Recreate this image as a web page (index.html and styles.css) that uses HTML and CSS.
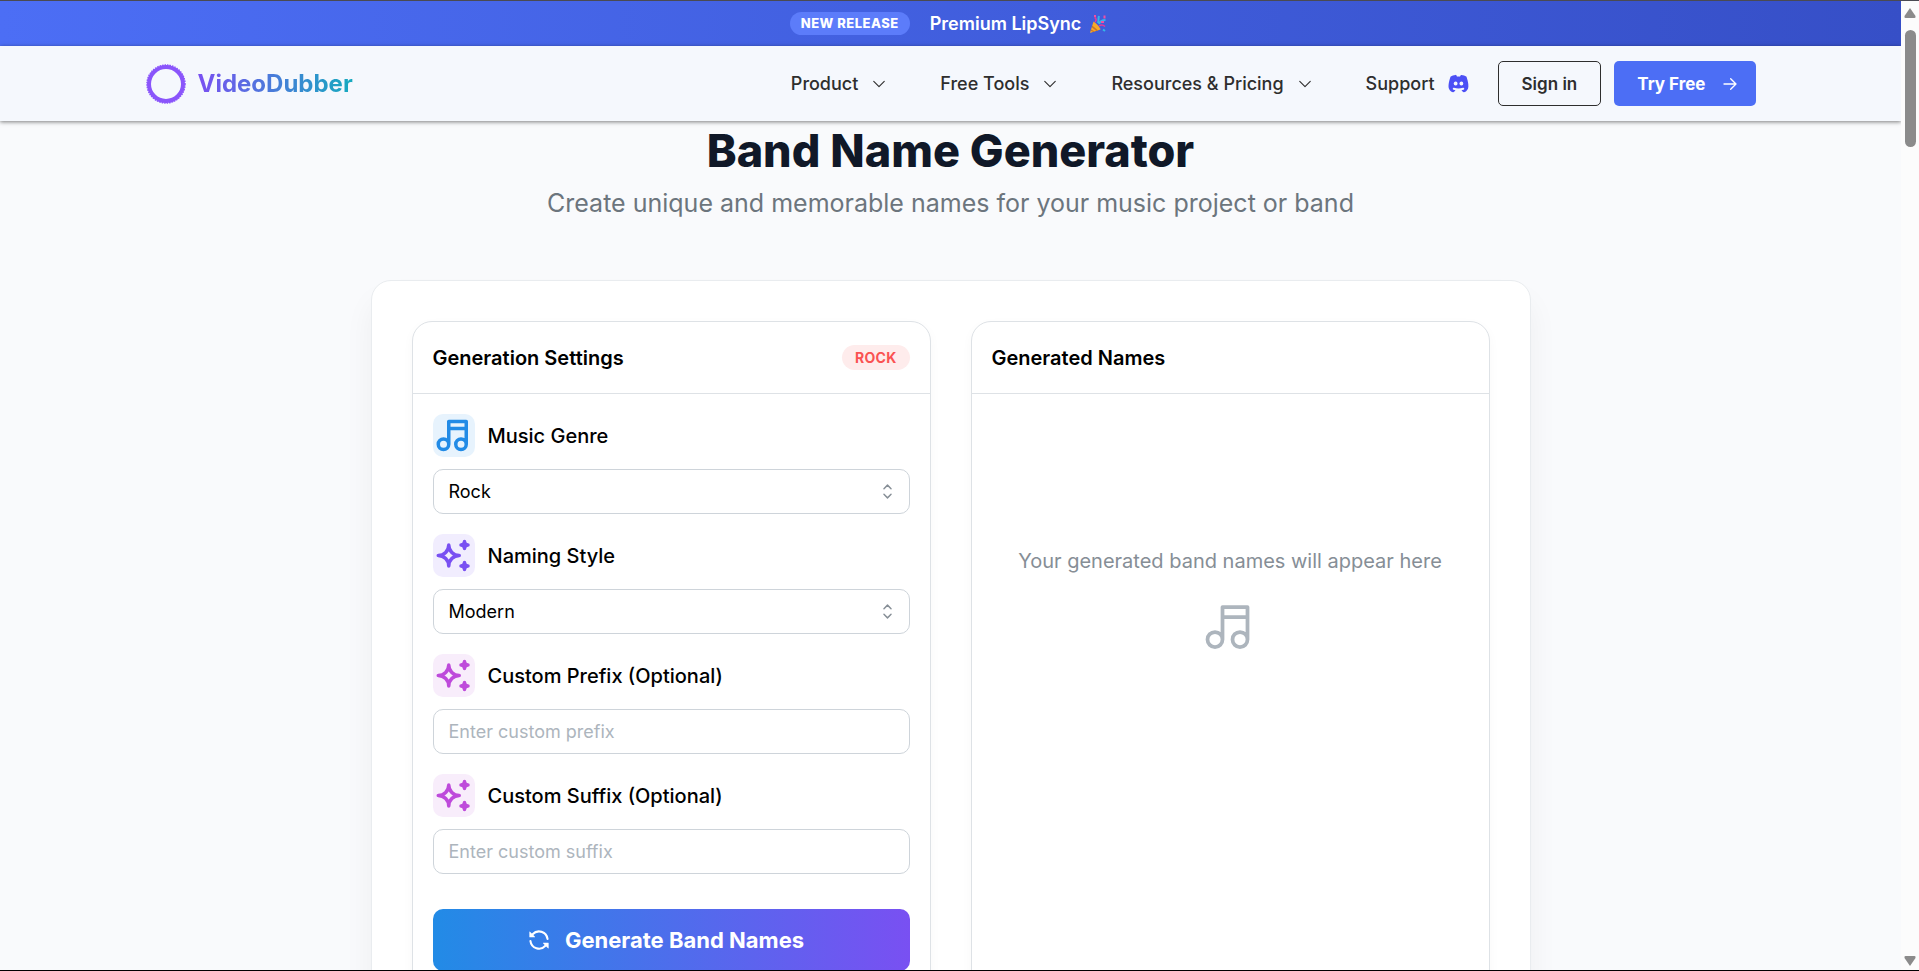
FILE: index.html
```
<!doctype html>
<html lang="en">
  <head>
    <meta charset="utf-8">
    <title>Band Name Generator | VideoDubber</title>
    <link rel="stylesheet" href="styles.css">
  </head>
  <body>
    <svg class="sprite" aria-hidden="true">
      <symbol id="i-chevron" viewBox="0 0 24 24"><path d="M5 8.500l7 7l7 -7"/></symbol>
      <symbol id="i-arrow" viewBox="0 0 24 24"><path d="M3 12h18M13 4l8 8l-8 8"/></symbol>
      <symbol id="i-selector" viewBox="0 0 24 24"><path d="M7 8l5 -5l5 5M7 16l5 5l5 -5"/></symbol>
      <symbol id="i-music" viewBox="0 0 24 24"><path d="M3 17a3 3 0 1 0 6 0a3 3 0 0 0 -6 0M13 17a3 3 0 1 0 6 0a3 3 0 0 0 -6 0M9 17v-13h10v13M9 8h10"/></symbol>
      <symbol id="i-sparkles" viewBox="0 0 24 24"><path d="M16 18a2 2 0 0 1 2 2a2 2 0 0 1 2 -2a2 2 0 0 1 -2 -2a2 2 0 0 1 -2 2zM16 6a2 2 0 0 1 2 2a2 2 0 0 1 2 -2a2 2 0 0 1 -2 -2a2 2 0 0 1 -2 2zM9 18a6 6 0 0 1 6 -6a6 6 0 0 1 -6 -6a6 6 0 0 1 -6 6a6 6 0 0 1 6 6z"/></symbol>
      <symbol id="i-sync" viewBox="0 0 16 16"><path d="M1.705 8.005a.75.75 0 0 1 .834.656 5.500 5.500 0 0 0 9.592 2.970l-1.204-1.204a.25.25 0 0 1 .177-.427h3.646a.25.25 0 0 1 .25.25v3.646a.25.25 0 0 1-.427.177l-1.380-1.380A7.002 7.002 0 0 1 1.050 8.840a.75.75 0 0 1 .656-.834ZM8 2.500a5.487 5.487 0 0 0-4.131 1.869l1.204 1.204A.25.25 0 0 1 4.896 6H1.250A.25.25 0 0 1 1 5.750V2.104a.25.25 0 0 1 .427-.177l1.380 1.380A7.002 7.002 0 0 1 14.950 7.160a.75.75 0 0 1-1.490.178A5.500 5.500 0 0 0 8 2.500Z"/></symbol>
    </svg>

    <div class="window">
      <div class="page">
        <a class="banner" href="#">
          <span class="banner-badge">NEW RELEASE</span>
          <span class="banner-text">Premium LipSync</span>
          <svg class="party" viewBox="0 0 18 20" role="img" aria-label="party popper">
            <path fill="#f7a928" d="M1 19L4.500 7.500C7 9 10.500 12.500 11.500 15.500z"/>
            <path fill="#c8772b" d="M2 15.500l4 2-1.700.5-2.700-1.300zM3.200 11.500l6 5-1.800.5-4.700-3.800z"/>
            <path fill="none" stroke="#e6399b" stroke-width="1.500" d="M6 8c2-2 1-4-.5-4.500M10 12c2-1.500 4-1.500 6 .5"/>
            <path fill="none" stroke="#35b6e8" stroke-width="2" d="M9 9c1-3 0-4 1-7M10 10c1-3 3-4 6.500-4M14 15.500l2 1.500"/>
            <path fill="#f04fa5" d="M12 7h3v2h-3zM5 1h2v2h-2zM14.500 1.500h2v3h-2z"/>
          </svg>
        </a>

        <header class="header">
          <div class="header-inner">
            <a class="logo" href="#">
              <svg class="logo-mark" viewBox="0 0 40 40" aria-hidden="true">
                <circle cx="20" cy="20" r="17" fill="none" stroke="#8a55fb" stroke-width="4"/>
                <circle cx="20" cy="20" r="19" fill="none" stroke="#8a55fb" stroke-width="1.500" stroke-dasharray="1.500 1"/>
              </svg>
              <span class="logo-text">VideoDubber</span>
            </a>
            <nav class="nav">
              <button class="nav-item" type="button">Product <svg class="chevron"><use href="#i-chevron"/></svg></button>
              <button class="nav-item" type="button">Free Tools <svg class="chevron"><use href="#i-chevron"/></svg></button>
              <button class="nav-item" type="button">Resources &amp; Pricing <svg class="chevron"><use href="#i-chevron"/></svg></button>
              <a class="nav-item" href="#">Support
                <svg class="discord" viewBox="0 0 24 24" aria-hidden="true"><path d="M14.983 3l.123 .006c2.014 .214 3.527 .672 4.966 1.673a1 1 0 0 1 .371 .488c1.876 5.315 2.373 9.987 1.451 12.280c-1.003 2.005 -2.606 3.553 -4.394 3.553c-.732 0 -1.693 -.968 -2.328 -2.045a21.512 21.512 0 0 0 2.103 -.493a1 1 0 1 0 -.55 -1.924c-3.320 .95 -6.130 .95 -9.450 0a1 1 0 0 0 -.55 1.924c.717 .204 1.416 .37 2.103 .494c-.635 1.075 -1.596 2.044 -2.328 2.044c-1.788 0 -3.391 -1.548 -4.428 -3.629c-.888 -2.217 -.39 -6.890 1.485 -12.204a1 1 0 0 1 .371 -.488c1.439 -1.001 2.952 -1.459 4.966 -1.673a1 1 0 0 1 .935 .435l.063 .107l.651 1.285l.137 -.016a12.970 12.970 0 0 1 2.643 0l.134 .016l.65 -1.284a1 1 0 0 1 .754 -.54l.122 -.009zM9 10a2 2 0 0 0 -1.977 1.697l-.018 .154l-.005 .149l.005 .15a2 2 0 1 0 1.995 -2.150zM15 10a2 2 0 0 0 -1.977 1.697l-.018 .154l-.005 .149l.005 .15a2 2 0 1 0 1.995 -2.150z"/></svg>
              </a>
            </nav>
            <div class="actions">
              <a class="btn btn-outline" href="#">Sign in</a>
              <a class="btn btn-primary" href="#">Try Free <svg class="arrow"><use href="#i-arrow"/></svg></a>
            </div>
          </div>
        </header>

        <main class="main">
          <h1 class="title">Band Name Generator</h1>
          <p class="subtitle">Create unique and memorable names for your music project or band</p>

          <div class="card">
            <form class="panel">
              <div class="panel-head">
                <h2 class="panel-title">Generation Settings</h2>
                <span class="badge">ROCK</span>
              </div>
              <div class="panel-body">
                <div class="field">
                  <label class="field-label" for="genre"><span class="field-icon blue"><svg><use href="#i-music"/></svg></span>Music Genre</label>
                  <div class="select-wrap">
                    <select class="control" id="genre">
                      <option>Rock</option>
                      <option>Pop</option>
                      <option>Jazz</option>
                      <option>Metal</option>
                    </select>
                    <svg class="selector"><use href="#i-selector"/></svg>
                  </div>
                </div>
                <div class="field">
                  <label class="field-label" for="style"><span class="field-icon violet"><svg><use href="#i-sparkles"/></svg></span>Naming Style</label>
                  <div class="select-wrap">
                    <select class="control" id="style">
                      <option>Modern</option>
                      <option>Classic</option>
                    </select>
                    <svg class="selector"><use href="#i-selector"/></svg>
                  </div>
                </div>
                <div class="field">
                  <label class="field-label" for="prefix"><span class="field-icon grape"><svg><use href="#i-sparkles"/></svg></span>Custom Prefix (Optional)</label>
                  <input class="control" id="prefix" type="text" placeholder="Enter custom prefix">
                </div>
                <div class="field">
                  <label class="field-label" for="suffix"><span class="field-icon grape"><svg><use href="#i-sparkles"/></svg></span>Custom Suffix (Optional)</label>
                  <input class="control" id="suffix" type="text" placeholder="Enter custom suffix">
                </div>
                <button class="generate" type="button"><svg class="sync"><use href="#i-sync"/></svg>Generate Band Names</button>
              </div>
            </form>

            <section class="panel">
              <div class="panel-head">
                <h2 class="panel-title">Generated Names</h2>
              </div>
              <div class="empty">
                <p class="empty-text">Your generated band names will appear here</p>
                <svg class="empty-icon"><use href="#i-music"/></svg>
              </div>
            </section>
          </div>
        </main>
      </div>

      <div class="scrollbar" aria-hidden="true">
        <svg class="scroll-arrow" viewBox="0 0 12 10"><path d="M6 0l5.500 8q.5 2-1 2h-9q-1.500 0-1-2z"/></svg>
        <div class="scroll-track"><div class="scroll-thumb"></div></div>
        <svg class="scroll-arrow" viewBox="0 0 12 10"><path d="M6 10l5.500-8q.5-2-1-2h-9q-1.500 0-1 2z"/></svg>
      </div>
    </div>
  </body>
</html>
```
FILE: styles.css
```
* { box-sizing: border-box; }

body {
  margin: 0;
  font-family: Inter, "Liberation Sans", sans-serif;
  color: #000;
  background: #f9fafc;
}

h1, h2, p { margin: 0; }
a { color: inherit; text-decoration: none; }
button { font: inherit; color: inherit; border: 0; background: none; padding: 0; cursor: pointer; }
svg { flex: none; }

.sprite { display: none; }

.window {
  display: flex;
  height: 100vh;
  border-top: 1px solid #4a4a52;
  border-bottom: 1px solid #000;
}
.page { flex: 1; overflow: hidden; }

/* announcement */
.banner {
  display: flex;
  align-items: center;
  justify-content: center;
  height: 45px;
  padding-right: 4px;
  color: #fff;
  background: linear-gradient(90deg, #4c6ef5, #364fc7);
}
.banner-badge {
  padding: 0 11px;
  margin-right: 20px;
  border-radius: 12px;
  background: #5c7cfa;
  font-size: 13px;
  line-height: 23px;
  font-weight: 800;
  letter-spacing: 0.5px;
}
.banner-text { font-size: 18px; font-weight: 600; margin-right: 8px; }
.party { width: 18px; height: 20px; }

/* header */
.header {
  position: relative;
  background: #f5f8fd;
  box-shadow: 0 1px 4px rgba(0, 0, 0, 0.5);
}
.header-inner {
  display: flex;
  align-items: center;
  max-width: 1610px;
  height: 75px;
  margin: 0 auto;
}
.logo { display: flex; align-items: center; gap: 12px; margin-right: auto; }
.logo-mark { width: 40px; height: 40px; }
.logo-text {
  font-size: 24px;
  font-weight: 700;
  color: transparent;
  background: linear-gradient(90deg, #7950f2, #15aabf);
  -webkit-background-clip: text;
  background-clip: text;
}
.nav { display: flex; gap: 52px; margin-right: 28px; }
.nav-item {
  display: flex;
  align-items: center;
  gap: 12px;
  font-size: 18px;
  font-weight: 500;
  color: #2e2e2e;
}
.chevron, .arrow, .selector, .field-icon svg, .empty-icon {
  fill: none;
  stroke: currentColor;
  stroke-width: 2;
  stroke-linecap: round;
  stroke-linejoin: round;
}
.chevron { width: 18px; height: 18px; stroke-width: 1.5; }
.discord { width: 23px; height: 23px; fill: #4c50f5; }
.actions { display: flex; gap: 13px; }
.btn {
  display: flex;
  align-items: center;
  gap: 16px;
  height: 45px;
  padding: 0 23px;
  border-radius: 5px;
  font-size: 17px;
}
.btn-outline { border: 1px solid #2e2e2e; color: #2e2e2e; font-weight: 600; }
.btn-primary { padding-right: 18px; background: #4c6ef5; color: #fff; font-weight: 700; }
.arrow { width: 16px; height: 16px; }

/* hero */
.title {
  font-size: 45px;
  line-height: 60px;
  font-weight: 800;
  text-align: center;
  color: #101828;
}
.subtitle {
  margin-top: 2px;
  font-size: 25px;
  line-height: 40px;
  text-align: center;
  color: #6c757d;
}

/* generator */
.card {
  display: grid;
  grid-template-columns: 1fr 1fr;
  gap: 40px;
  max-width: 1160px;
  margin: 57px auto 0;
  padding: 40px;
  border: 1px solid #e9ecef;
  border-radius: 20px;
  background: #fff;
  box-shadow: 0 20px 30px rgba(0, 0, 0, 0.05);
}
.panel {
  border: 1px solid #dee2e6;
  border-radius: 20px;
  background: #fff;
  box-shadow: 0 4px 12px rgba(0, 0, 0, 0.03);
}
.panel-head {
  display: flex;
  align-items: center;
  justify-content: space-between;
  height: 72px;
  padding: 0 20px;
  border-bottom: 1px solid #dee2e6;
}
.panel-title { font-size: 20px; font-weight: 600; }
.badge {
  padding: 0 13px;
  border-radius: 13px;
  font-size: 14px;
  line-height: 25px;
  font-weight: 700;
  letter-spacing: 0.3px;
  color: #fa5252;
  background: #feecec;
}
.panel-body { padding: 20px; }
.field { margin-bottom: 20px; }
.field-label {
  display: flex;
  align-items: center;
  gap: 13px;
  margin-bottom: 12px;
  font-size: 20px;
  font-weight: 500;
}
.field-icon { width: 42px; height: 43px; border-radius: 10px; }
.field-icon svg { display: block; width: 42px; height: 43px; }
.blue { color: #228be6; background: #e7f3fd; }
.violet { color: #7950f2; background: #f1edfe; }
.grape { color: #be4bdb; background: #f8edfb; }
.control {
  display: block;
  width: 100%;
  height: 45px;
  padding: 0 15px;
  border: 1px solid #ced4da;
  border-radius: 10px;
  appearance: none;
  background: #fff;
  font: inherit;
  font-size: 18px;
  color: #000;
}
.control::placeholder { color: #adb5bd; }
.select-wrap { position: relative; }
.selector { position: absolute; right: 14px; top: 14px; width: 17px; height: 17px; color: #868e96; pointer-events: none; }
.generate {
  display: flex;
  align-items: center;
  justify-content: center;
  gap: 15px;
  width: 100%;
  height: 62px;
  margin-top: 35px;
  padding-right: 10px;
  border-radius: 10px;
  background: linear-gradient(90deg, #228be6, #7950f2);
  color: #fff;
  font-size: 22px;
  font-weight: 700;
}
.sync { width: 22px; height: 22px; fill: currentColor; }

.empty { display: flex; flex-direction: column; align-items: center; padding-top: 150px; }
.empty-text { font-size: 20px; line-height: 34px; color: #868e96; }
.empty-icon { width: 60px; height: 60px; margin-top: 19px; color: #adb5bd; stroke-width: 1.5; }

/* page scrollbar */
.scrollbar {
  display: flex;
  flex-direction: column;
  align-items: center;
  width: 18px;
  padding: 7px 0 4px;
  background: #fcfcfc;
}
.scroll-arrow { width: 12px; height: 10px; fill: #8b8b8b; }
.scroll-track { flex: 1; padding-top: 12px; }
.scroll-thumb { width: 11px; height: 117px; border-radius: 6px; background: #8b8b8b; }
```
